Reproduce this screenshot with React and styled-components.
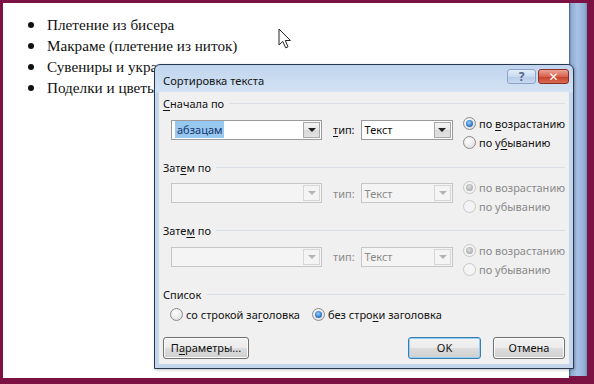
import styled, { createGlobalStyle } from 'styled-components';

const GlobalStyle = createGlobalStyle`
  html, body { margin: 0; padding: 0; }
  body { width: 594px; height: 384px; overflow: hidden; background: #7b1243; }
`;

const UI_FONT = `"Noto Sans", "Open Sans", "DejaVu Sans", sans-serif`;

const Frame = styled.div`
  position: relative;
  box-sizing: border-box;
  width: 594px;
  height: 384px;
  padding: 3px 7px 6px 3px;
  background: #7b1243;
  display: flex;
`;

const Page = styled.div`
  flex: 1;
  position: relative;
  background: #fff;
  padding-top: 12px;
`;

const SideStrip = styled.div`
  width: 18px;
  margin-bottom: 2px;
  background: linear-gradient(to right, #3f5a86 0, #8eaad3 2px, #a9c2e3 45%, #93afd6 85%, #7391c0 100%);
`;

const DocList = styled.ul`
  margin: 0;
  padding: 0 0 0 25px;
  list-style: none;
`;

const DocItem = styled.li`
  display: flex;
  align-items: center;
  height: 20.8px;
  font-family: "Liberation Serif", "DejaVu Serif", serif;
  font-size: 15.2px;
  color: #111;
  white-space: nowrap;

  &::before {
    content: '';
    width: 6px;
    height: 6px;
    border-radius: 50%;
    background: #111;
    margin-right: 13px;
  }
`;

const Cursor = styled.svg`
  position: absolute;
  left: 275px;
  top: 25px;
`;

const Dialog = styled.div`
  position: absolute;
  left: 154px;
  top: 64px;
  width: 420px;
  height: 305px;
  box-sizing: border-box;
  border: 1px solid #27384f;
  border-radius: 6px 6px 0 0;
  background: linear-gradient(to bottom, #c0d5ee 0, #d3e2f4 27px, #c3d6ec 28px);
  padding: 0 4px 4px;
  display: flex;
  flex-direction: column;
  font-family: ${UI_FONT};
  font-size: 11px;
  color: #111;
  box-shadow: 1px 1px 3px rgba(0, 0, 0, 0.25);
`;

const TitleBar = styled.div`
  height: 27px;
  display: flex;
  align-items: center;
  justify-content: space-between;
  padding: 4px 0 0 4px;
  box-sizing: border-box;
`;

const Title = styled.span`
  font-size: 11.2px;
  color: #151515;
`;

const CaptionButtons = styled.div`
  display: flex;
  gap: 2px;
  align-self: flex-start;
`;

const CaptionButton = styled.div`
  height: 15px;
  width: ${p => (p.$close ? '31px' : '29px')};
  box-sizing: border-box;
  border: 1px solid ${p => (p.$close ? '#8b2d22' : '#8aa3c6')};
  border-radius: 3px;
  background: ${p =>
    p.$close
      ? 'linear-gradient(to bottom, #eba496 0, #d7624e 50%, #c63f2b 51%, #d86b52 100%)'
      : 'linear-gradient(to bottom, #e4eef9 0, #c9daef 50%, #b6cbe6 51%, #c7d9ef 100%)'};
  display: flex;
  align-items: center;
  justify-content: center;
  color: ${p => (p.$close ? '#fff' : '#52688a')};
  font-size: 12px;
  font-weight: bold;
  line-height: 1;
`;

const Body = styled.div`
  flex: 1;
  background: #f0f0f0;
  padding: 4px 4px 0 4px;
  display: flex;
  flex-direction: column;
`;

const Section = styled.div`
  display: flex;
  flex-direction: column;
  gap: 3px;
  margin-bottom: ${p => p.$gap ?? 7.5}px;
`;

const SectionTitle = styled.div`
  display: flex;
  align-items: center;
  gap: 5px;
  height: 15px;
  white-space: nowrap;

  &::after {
    content: '';
    flex: 1;
    height: 1px;
    background: #d9dfe4;
  }
`;

const Key = styled.span`
  text-decoration: underline;
  text-underline-offset: 2px;
`;

const SortRow = styled.div`
  display: flex;
  align-items: flex-start;
  height: 38px;
  padding-left: 8px;
`;

const Combo = styled.div`
  margin-top: 5.5px;
  width: ${p => p.$width}px;
  height: 20px;
  box-sizing: border-box;
  border: 1px solid ${p => (p.$disabled ? '#c6c6c6' : '#9a9a9a')};
  background: ${p => (p.$disabled ? '#f4f4f4' : '#fff')};
  display: flex;
  align-items: center;
  padding-left: 3px;
  color: ${p => (p.$disabled ? '#8a8a8a' : '#111')};
`;

const ComboValue = styled.span`
  flex: 1;
  white-space: nowrap;
`;

const Selected = styled.span`
  background: #98c8ee;
  color: #14336e;
  padding: 1px 2px;
`;

const DropButton = styled.div`
  width: 17px;
  align-self: stretch;
  margin: 1px;
  box-sizing: border-box;
  border: 1px solid ${p => (p.$disabled ? '#d6d6d6' : '#a8a8a8')};
  background: ${p =>
    p.$disabled
      ? '#f4f4f4'
      : 'linear-gradient(to bottom, #f4f4f4 0, #e8e8e8 50%, #d9d9d9 51%, #e2e2e2 100%)'};
  display: flex;
  align-items: center;
  justify-content: center;

  &::after {
    content: '';
    border-left: 4px solid transparent;
    border-right: 4px solid transparent;
    border-top: 4px solid ${p => (p.$disabled ? '#b4b4b4' : '#222')};
  }
`;

const TypeLabel = styled.span`
  margin: 8px 6px 0 11px;
  color: ${p => (p.$disabled ? '#8a8a8a' : '#111')};
  white-space: nowrap;
`;

const OrderGroup = styled.div`
  display: flex;
  flex-direction: column;
  margin-left: 10px;
`;

const RadioLabel = styled.label`
  display: flex;
  align-items: center;
  gap: 3px;
  height: 19px;
  white-space: nowrap;
  color: ${p => (p.$disabled ? '#8a8a8a' : '#111')};
`;

const RadioDot = styled.span`
  width: 13px;
  height: 13px;
  box-sizing: border-box;
  border-radius: 50%;
  border: 1px solid ${p => (p.$disabled ? '#c8c8c8' : '#8c8c8c')};
  background: ${p =>
    p.$disabled ? '#f4f4f4' : 'radial-gradient(circle at 40% 35%, #ffffff 0, #e4e4e4 70%, #d0d0d0 100%)'};
  display: flex;
  align-items: center;
  justify-content: center;

  &::after {
    content: '';
    display: ${p => (p.$checked ? 'block' : 'none')};
    width: 7px;
    height: 7px;
    border-radius: 50%;
    background: ${p =>
      p.$disabled
        ? 'radial-gradient(circle at 45% 40%, #e0e0e0 0, #a6a6a6 80%)'
        : 'radial-gradient(circle at 45% 40%, #9bd4ff 0, #2b78c8 60%, #1c4f9a 100%)'};
  }
`;

const ListRow = styled.div`
  display: flex;
  align-items: center;
  gap: 12px;
  padding-left: 7px;
`;

const ButtonRow = styled.div`
  display: flex;
  align-items: center;
  margin-top: 13px;
  gap: 12px;
`;

const Button = styled.div`
  width: ${p => p.$width}px;
  height: 22px;
  box-sizing: border-box;
  border: 1px solid ${p => (p.$default ? '#3d7bad' : '#707070')};
  border-radius: 3px;
  background: linear-gradient(to bottom, #f3f3f3 0, #ebebeb 50%, #dddddd 51%, #cfcfcf 100%);
  box-shadow: ${p => (p.$default ? 'inset 0 0 0 1px #8fd0f4' : 'inset 0 0 0 1px #fbfbfb')};
  display: flex;
  align-items: center;
  justify-content: center;
  white-space: nowrap;
  margin-left: ${p => (p.$push ? 'auto' : '0')};
`;

const SortLevel = ({ title, value, disabled, first }) => (
  <Section>
    <SectionTitle>{title}</SectionTitle>
    <SortRow>
      <Combo $width={152} $disabled={disabled}>
        <ComboValue>{value}</ComboValue>
        <DropButton $disabled={disabled} />
      </Combo>
      <TypeLabel $disabled={disabled}>
        {first ? <><Key>т</Key>ип:</> : 'тип:'}
      </TypeLabel>
      <Combo $width={93} $disabled={disabled}>
        <ComboValue>Текст</ComboValue>
        <DropButton $disabled={disabled} />
      </Combo>
      <OrderGroup>
        <RadioLabel $disabled={disabled}>
          <RadioDot $checked $disabled={disabled} />
          {first ? <span>по <Key>в</Key>озрастанию</span> : 'по возрастанию'}
        </RadioLabel>
        <RadioLabel $disabled={disabled}>
          <RadioDot $disabled={disabled} />
          {first ? <span>по у<Key>б</Key>ыванию</span> : 'по убыванию'}
        </RadioLabel>
      </OrderGroup>
    </SortRow>
  </Section>
);

export default function App() {
  return (
    <>
      <GlobalStyle />
      <Frame>
        <Page>
          <DocList>
            <DocItem>Плетение из бисера</DocItem>
            <DocItem>Макраме (плетение из ниток)</DocItem>
            <DocItem>Сувениры и украшения</DocItem>
            <DocItem>Поделки и цветы</DocItem>
          </DocList>
          <Cursor width="14" height="22" viewBox="0 0 14 22">
            <path
              d="M1 1 L1 17 L4.8 13.4 L7.6 19.8 L10 18.8 L7.3 12.5 L12.4 12.5 Z"
              fill="#fff"
              stroke="#222"
              strokeWidth="1"
              strokeLinejoin="round"
            />
          </Cursor>
        </Page>
        <SideStrip />
        <Dialog>
          <TitleBar>
            <Title>Сортировка текста</Title>
            <CaptionButtons>
              <CaptionButton>?</CaptionButton>
              <CaptionButton $close>✕</CaptionButton>
            </CaptionButtons>
          </TitleBar>
          <Body>
            <SortLevel
              first
              title={<span><Key>С</Key>начала по</span>}
              value={<Selected>абзацам</Selected>}
            />
            <SortLevel disabled title={<span>Зат<Key>е</Key>м по</span>} value="" />
            <SortLevel disabled title={<span>Зате<Key>м</Key> по</span>} value="" />
            <Section $gap={0}>
              <SectionTitle>Список</SectionTitle>
              <ListRow>
                <RadioLabel>
                  <RadioDot />
                  <span>со строкой за<Key>г</Key>оловка</span>
                </RadioLabel>
                <RadioLabel>
                  <RadioDot $checked />
                  <span>без стро<Key>к</Key>и заголовка</span>
                </RadioLabel>
              </ListRow>
            </Section>
            <ButtonRow>
              <Button $width={86}>
                <span>П<Key>а</Key>раметры...</span>
              </Button>
              <Button $width={73} $default $push>OK</Button>
              <Button $width={72}>Отмена</Button>
            </ButtonRow>
          </Body>
        </Dialog>
      </Frame>
    </>
  );
}
